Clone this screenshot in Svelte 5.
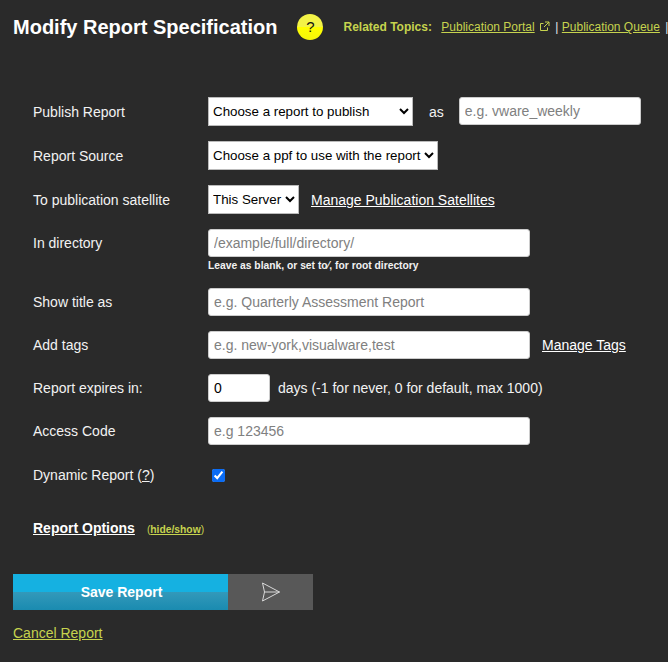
<script>
  let dynamicReport = $state(true);
</script>

<div class="page">
  <header class="top">
    <h1>Modify Report Specification</h1>
    <span class="help">?</span>
    <div class="related">
      <b>Related Topics:</b>
      <a href="#portal" class="first">Publication Portal</a>
      <svg class="ext" width="11" height="11" viewBox="0 0 11 11" fill="none" stroke="currentColor" stroke-width="1">
        <path d="M8.5 6.5v3h-7v-7h3M6 1h4v4M10 1 5 6" />
      </svg>
      <span class="sep">|</span> <a href="#queue">Publication Queue</a> <span class="sep">|</span>
    </div>
  </header>

  <form class="form">
    <div class="row sel">
      <label for="report">Publish Report</label>
      <select id="report" class="sel-report"><option>Choose a report to publish</option></select>
      <span class="as">as</span>
      <input class="short" placeholder="e.g. vware_weekly" />
    </div>
    <div class="row sel">
      <label for="ppf">Report Source</label>
      <select id="ppf" class="sel-ppf"><option>Choose a ppf to use with the report</option></select>
    </div>
    <div class="row sel">
      <label for="sat">To publication satellite</label>
      <select id="sat" class="sel-sat"><option>This Server</option></select>
      <a href="#sat" class="manage">Manage Publication Satellites</a>
    </div>
    <div class="row dir">
      <label for="dir">In directory</label>
      <input id="dir" class="wide" placeholder="/example/full/directory/" />
    </div>
    <p class="hint">Leave as blank, or set to⁄, for root directory</p>
    <div class="row">
      <label for="title">Show title as</label>
      <input id="title" class="wide" placeholder="e.g. Quarterly Assessment Report" />
    </div>
    <div class="row">
      <label for="tags">Add tags</label>
      <input id="tags" class="wide" placeholder="e.g. new-york,visualware,test" />
      <a href="#tags" class="manage">Manage Tags</a>
    </div>
    <div class="row">
      <label for="exp">Report expires in:</label>
      <input id="exp" class="num" value="0" />
      <span class="days">days (-1 for never, 0 for default, max 1000)</span>
    </div>
    <div class="row">
      <label for="code">Access Code</label>
      <input id="code" class="wide" placeholder="e.g 123456" />
    </div>
    <div class="row dyn">
      <label for="dyn">Dynamic Report (<a href="#q" class="q">?</a>)</label>
      <input id="dyn" type="checkbox" class="check" bind:checked={dynamicReport} />
    </div>
    <div class="options">
      <a href="#opts" class="opt-title">Report Options</a>
      <span class="opt-toggle">(<a href="#toggle">hide/show</a>)</span>
    </div>
  </form>

  <div class="actions">
    <button type="button" class="save">Save Report</button>
    <button type="button" class="send" aria-label="Send">
      <svg width="20" height="20" viewBox="0 0 20 20" fill="none" stroke="#d8d8d8" stroke-width="1">
        <path d="M1.5 1 18.5 10 1.5 19 3.5 10Z M3.5 10H18.5" />
      </svg>
    </button>
  </div>
  <a href="#cancel" class="cancel">Cancel Report</a>
</div>

<style>
  :global(body) {
    background: #2a2a2a;
    font-family: "Liberation Sans", Arial, sans-serif;
  }

  .page {
    height: 662px;
    overflow: hidden;
    color: #f2f2f2;
    font-size: 14px;
    padding: 0 0 0 13px;
    box-sizing: border-box;
  }

  a {
    color: #fff;
  }

  .top {
    display: flex;
    align-items: center;
    height: 28px;
    padding-top: 13px;
    white-space: nowrap;
  }

  h1 {
    margin: 0;
    font-size: 20px;
    font-weight: bold;
    color: #fff;
  }

  .help {
    flex: none;
    width: 26px;
    height: 26px;
    margin-left: 20px;
    border-radius: 50%;
    background: linear-gradient(#f3f347 50%, #ffff00 50%, #f6f60a);
    color: #111;
    font-size: 15px;
    line-height: 26px;
    text-align: center;
  }

  .related {
    margin-left: 20px;
    font-size: 12px;
    color: #c6d34e;
  }

  .related a {
    color: #c6d34e;
  }

  .related .first {
    margin-left: 6px;
  }

  .ext {
    margin-left: 1px;
    vertical-align: -1px;
  }

  .sep {
    margin-left: 2px;
    color: #e8e8e8;
  }

  .form {
    padding: 56px 0 0 20px;
  }

  .row {
    display: flex;
    align-items: center;
    height: 28px;
    margin-bottom: 15px;
  }

  .row.sel {
    height: 29px;
  }

  .row.sel input {
    align-self: flex-start;
  }

  .row.dir {
    margin-bottom: 0;
  }

  .row.dyn {
    height: 30px;
  }

  label {
    flex: none;
    width: 175px;
  }

  select,
  input {
    box-sizing: border-box;
    font-family: "Liberation Sans", Arial, sans-serif;
    font-size: 14px;
    margin: 0;
  }

  select {
    height: 29px;
    background: #fff;
    color: #000;
    border: 1px solid #bbb;
    border-radius: 0;
    font-size: 13.33px;
  }

  .sel-report {
    width: 205px;
  }

  .sel-ppf {
    width: 230px;
  }

  .sel-sat {
    width: 91px;
  }

  .as {
    margin: 0 15px 0 16px;
  }

  input {
    height: 28px;
    border: 1px solid #ccc;
    border-radius: 3px;
    background: #fff;
    padding: 0 5px;
    color: #000;
  }

  input::placeholder {
    color: #808080;
  }

  .short {
    width: 182px;
  }

  .wide {
    width: 322px;
  }

  .num {
    width: 62px;
  }

  .days {
    margin-left: 8px;
  }

  .manage {
    margin-left: 12px;
  }

  .hint {
    margin: 3px 0 16px 175px;
    font-size: 10.3px;
    font-weight: bold;
    line-height: 12px;
  }

  .q {
    color: #f2f2f2;
  }

  .check {
    width: 13px;
    height: 13px;
    margin: 1px 0 0 4px;
    accent-color: #0a6cf5;
  }

  .options {
    margin-top: 30px;
    display: flex;
    align-items: baseline;
    gap: 12px;
  }

  .opt-title {
    font-weight: bold;
    font-size: 14px;
  }

  .opt-toggle {
    font-size: 10.3px;
    color: #c6d34e;
  }

  .opt-toggle a {
    color: #c6d34e;
    font-weight: bold;
  }

  .actions {
    display: flex;
    margin-top: 38px;
    width: 300px;
    height: 36px;
  }

  button {
    border: 0;
    padding: 0;
    margin: 0;
    height: 36px;
    font-family: inherit;
  }

  .save {
    width: 215px;
    padding-left: 2px;
    background: linear-gradient(#15b1e1 50%, #3399ba 50%, #1a8bb0);
    color: #fff;
    font-size: 14px;
    font-weight: bold;
  }

  .send {
    width: 85px;
    background: #585858;
    display: flex;
    align-items: center;
    justify-content: center;
  }

  .cancel {
    display: inline-block;
    margin-top: 15px;
    color: #c6d34e;
  }
</style>
